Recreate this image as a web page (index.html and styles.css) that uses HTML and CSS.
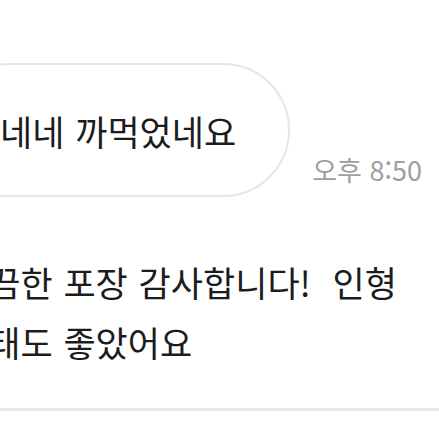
FILE: index.html
```html
<!DOCTYPE html>
<html lang="ko">
<head>
    <meta charset="UTF-8">
    <title>채팅</title>
    <link rel="stylesheet" href="styles.css">
</head>
<body>
    <div class="chat">
        <div class="msg-row">
            <div class="bubble">네네 까먹었네요</div>
            <span class="time">오후 8:50</span>
        </div>
        <div class="msg-text">깔끔한 포장 감사합니다!&nbsp; 인형<br>상태도 좋았어요</div>
        <div class="divider"></div>
    </div>
</body>
</html>
```

FILE: styles.css
```css
body {
    font-family: 'Noto Sans CJK KR', 'Noto Sans', sans-serif;
    background: #fff;
    color: #1c1c1c;
    margin: 0;
    padding: 0;
    width: 439px;
    height: 439px;
    overflow: hidden;
}
.chat {
    display: flex;
    flex-direction: column;
    padding-top: 63px;
}
.msg-row {
    display: flex;
    align-items: flex-end;
    gap: 22px;
}
.bubble {
    margin-left: -58px;
    height: 130px;
    border: 2px solid #e6e6e6;
    border-radius: 67px;
    padding: 0 52px 0 56px;
    display: flex;
    align-items: center;
    font-size: 35px;
    word-spacing: 1px;
    white-space: nowrap;
}
.time {
    font-size: 27px;
    line-height: 1;
    color: #9e9e9e;
    margin-bottom: 14px;
    white-space: nowrap;
}
.msg-text {
    margin: 55px 0 0 -44px;
    font-size: 35px;
    line-height: 60px;
    word-spacing: 1px;
    white-space: nowrap;
}
.divider {
    margin-top: 36px;
    height: 3px;
    background: #e8e8e8;
}
```
